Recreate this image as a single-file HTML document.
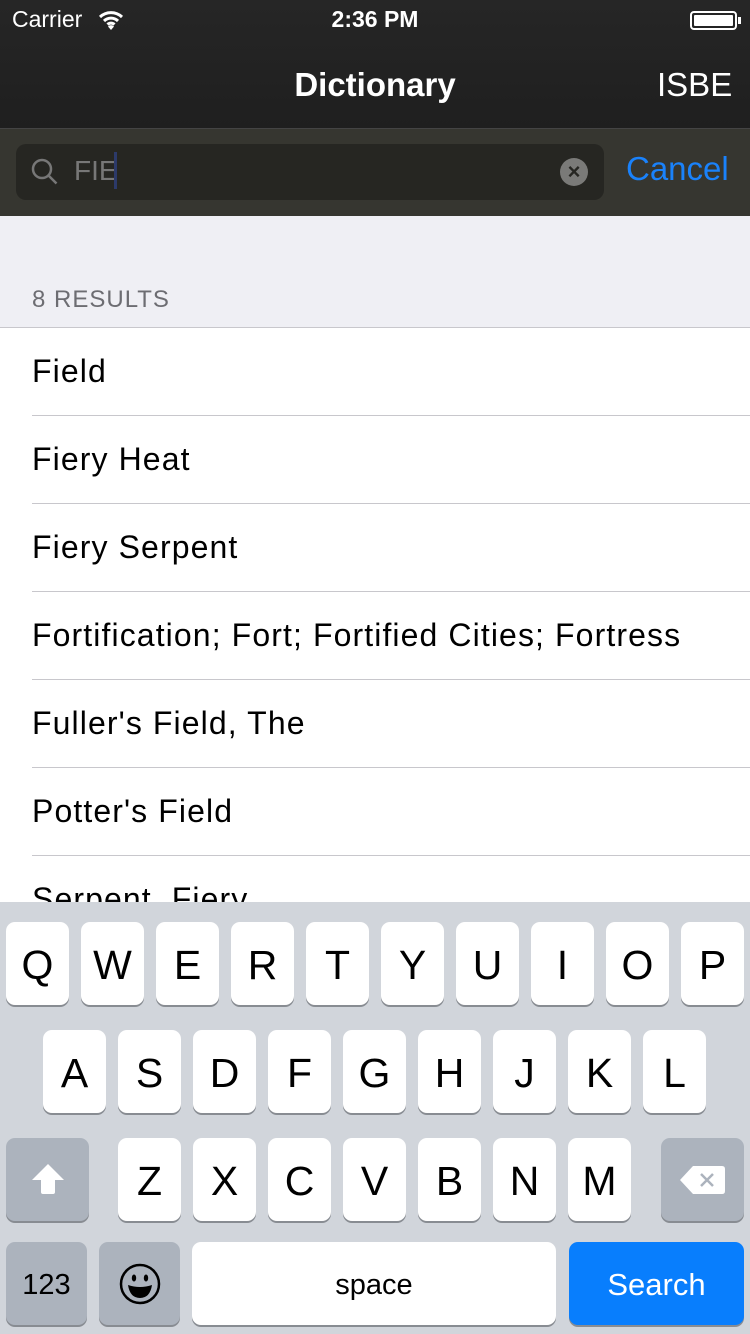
<!DOCTYPE html>
<html><head><meta charset="utf-8"><style>
*{margin:0;padding:0;box-sizing:border-box}
body{width:750px;height:1334px;overflow:hidden;font-family:"Liberation Sans",sans-serif;background:#fff;position:relative}
.a{position:absolute}
.nav{left:0;top:0;width:750px;height:128px;background:linear-gradient(#262626,#1f1f1f)}
.sb{left:0;top:128px;width:750px;height:88px;background:#363630;border-top:1px solid #444}
.row{left:32px;width:718px;height:88px;font-size:32px;letter-spacing:1.1px;color:#000;line-height:86px;border-bottom:1px solid #c8c7cc;white-space:nowrap}
.kb{left:0;top:902px;width:750px;height:432px;background:#d1d5db}
.k{position:absolute;width:63px;height:83px;background:#fff;border-radius:9px;box-shadow:0 2px 0 #888c92;font-size:41px;text-align:center;line-height:86px;color:#000}
.g{background:#acb3bd}
</style></head><body>
<div class="a nav"></div>
<div class="a" style="left:12px;top:6px;font-size:23px;color:#fff">Carrier</div>
<svg class="a" style="left:98px;top:10px" width="26" height="20" viewBox="0 0 26 20"><path d="M2 7a16 16 0 0 1 22 0M6 11a10 10 0 0 1 14 0M9.5 14.5a5 5 0 0 1 7 0" stroke="#fff" stroke-width="3" fill="none"/><path d="M13 20l-3-3.5a4 4 0 0 1 6 0z" fill="#fff"/></svg>
<div class="a" style="left:0;width:750px;top:6px;text-align:center;font-size:23px;color:#fff;font-weight:bold">2:36 PM</div>
<div class="a" style="left:690px;top:11px;width:47px;height:19px;border:2px solid #fff;border-radius:4px;padding:2px"><div style="background:#fff;width:100%;height:100%;border-radius:1px"></div></div>
<div class="a" style="left:738px;top:17px;width:3px;height:7px;background:#fff"></div>
<div class="a" style="left:0;width:750px;top:66px;text-align:center;font-size:33px;color:#fff;font-weight:bold">Dictionary</div>
<div class="a" style="left:657px;top:66px;font-size:33px;color:#fff">ISBE</div>
<div class="a sb"></div>
<div class="a" style="left:16px;top:144px;width:588px;height:56px;background:#262622;border-radius:10px"></div>
<svg class="a" style="left:30px;top:157px" width="30" height="30" viewBox="0 0 30 30"><circle cx="12" cy="12" r="9" stroke="#777" stroke-width="2.5" fill="none"/><path d="M18.5 18.5l8 8" stroke="#777" stroke-width="2.5"/></svg>
<div class="a" style="left:74px;top:155px;font-size:28px;color:#777">FIE</div>
<div class="a" style="left:114px;top:152px;width:3px;height:37px;background:#2c3a6a"></div>
<div class="a" style="left:560px;top:158px;width:28px;height:28px;border-radius:50%;background:#7a7a78;color:#262622;font-size:22px;font-weight:bold;text-align:center;line-height:28px">×</div>
<div class="a" style="left:626px;top:150px;font-size:33px;color:#1a82fb">Cancel</div>
<div class="a" style="left:0;top:216px;width:750px;height:112px;background:#efeff4;border-bottom:1px solid #c8c7cc"></div>
<div class="a" style="left:32px;top:286px;font-size:24px;letter-spacing:1px;color:#6d6d72">8 RESULTS</div>
<div class="a row" style="top:328px">Field</div>
<div class="a row" style="top:416px">Fiery Heat</div>
<div class="a row" style="top:504px">Fiery Serpent</div>
<div class="a row" style="top:592px">Fortification; Fort; Fortified Cities; Fortress</div>
<div class="a row" style="top:680px">Fuller's Field, The</div>
<div class="a row" style="top:768px">Potter's Field</div>
<div class="a row" style="top:856px">Serpent, Fiery</div>
<div class="a kb">
<div style="position:absolute;top:20px;left:0">
<div class="k" style="left:6px">Q</div><div class="k" style="left:81px">W</div><div class="k" style="left:156px">E</div><div class="k" style="left:231px">R</div><div class="k" style="left:306px">T</div><div class="k" style="left:381px">Y</div><div class="k" style="left:456px">U</div><div class="k" style="left:531px">I</div><div class="k" style="left:606px">O</div><div class="k" style="left:681px">P</div>
</div>
<div style="position:absolute;top:128px;left:0">
<div class="k" style="left:43px">A</div><div class="k" style="left:118px">S</div><div class="k" style="left:193px">D</div><div class="k" style="left:268px">F</div><div class="k" style="left:343px">G</div><div class="k" style="left:418px">H</div><div class="k" style="left:493px">J</div><div class="k" style="left:568px">K</div><div class="k" style="left:643px">L</div>
</div>
<div style="position:absolute;top:236px;left:0">
<div class="k g" style="left:6px;width:83px"><svg width="40" height="40" viewBox="0 0 40 40" style="margin-top:22px"><path d="M20 4L36 20H27V32Q27 34 25 34H15Q13 34 13 32V20H4Z" fill="#fff"/></svg></div>
<div class="k" style="left:118px">Z</div><div class="k" style="left:193px">X</div><div class="k" style="left:268px">C</div><div class="k" style="left:343px">V</div><div class="k" style="left:418px">B</div><div class="k" style="left:493px">N</div><div class="k" style="left:568px">M</div>
<div class="k g" style="left:661px;width:83px"><svg width="48" height="30" viewBox="0 0 48 30" style="margin-top:27px"><path d="M1 15L14 1H43Q46 1 46 4V26Q46 29 43 29H14Z" fill="#fff"/><path d="M22 9l12 12M34 9L22 21" stroke="#acb3bd" stroke-width="2.5"/></svg></div>
</div>
<div style="position:absolute;top:340px;left:0">
<div class="k g" style="left:6px;width:81px;font-size:29px">123</div>
<div class="k g" style="left:99px;width:81px"><svg width="42" height="42" viewBox="0 0 42 42" style="margin-top:21px"><circle cx="21" cy="21" r="19" stroke="#000" stroke-width="2.5" fill="none"/><ellipse cx="15" cy="15" rx="2.2" ry="3.5"/><ellipse cx="27" cy="15" rx="2.2" ry="3.5"/><path d="M9 22Q21 26 33 22Q31 35 21 35Q11 35 9 22Z"/></svg></div>
<div class="k" style="left:192px;width:364px;font-size:29px">space</div>
<div class="k" style="left:569px;width:175px;background:#087efd;color:#fff;font-size:31px">Search</div>
</div>
</div>
</body></html>
